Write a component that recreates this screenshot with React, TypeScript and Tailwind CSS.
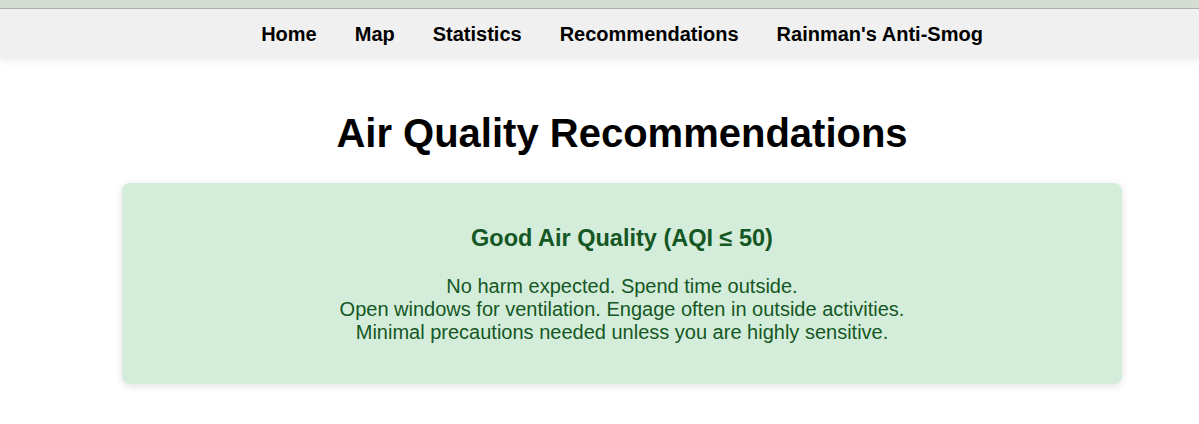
const links = ["Home", "Map", "Statistics", "Recommendations", "Rainman's Anti-Smog"];

const tips = [
  "No harm expected. Spend time outside.",
  "Open windows for ventilation. Engage often in outside activities.",
  "Minimal precautions needed unless you are highly sensitive.",
];

export default function App() {
  return (
    <div className="min-h-screen bg-white font-['Liberation_Sans',Arial,sans-serif] text-black">
      <div className="h-[9px] border-b border-[#abb1ab] bg-[#d5ddd5]" />
      <nav className="bg-[#f0f0f0] pl-[45px] shadow-[0_3px_6px_rgba(0,0,0,0.06)]">
        <ul className="flex h-[50px] items-center justify-center gap-[38px]">
          {links.map((l) => (
            <li key={l}>
              <a href="#" className="text-[20px] font-bold text-black">
                {l}
              </a>
            </li>
          ))}
        </ul>
      </nav>

      <main className="flex flex-col items-center pl-[45px]">
        <h1 className="mt-[51px] text-[40px] leading-[46px] font-bold">
          Air Quality Recommendations
        </h1>

        <section className="mt-[27px] w-[1000px] rounded-[8px] bg-[#d4edda] px-6 pt-[41px] pb-[40px] text-center text-[#155724] shadow-[0_2px_8px_rgba(0,0,0,0.12)]">
          <h3 className="text-[23.5px] leading-[28px] font-bold">Good Air Quality (AQI ≤ 50)</h3>
          <p className="mt-[23px] text-[20px] leading-[23px]">
            {tips.map((t) => (
              <span key={t} className="block">
                {t}
              </span>
            ))}
          </p>
        </section>
      </main>
    </div>
  );
}
